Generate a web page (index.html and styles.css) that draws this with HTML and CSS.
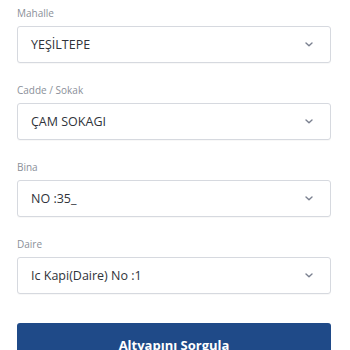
FILE: index.html
```html
<!DOCTYPE html>
<html lang="tr">
<head>
<meta charset="utf-8">
<link rel="stylesheet" href="styles.css">
</head>
<body>
<div class="form">
  <div class="field">
    <div class="label">Mahalle</div>
    <div class="select"><span class="value">YEŞİLTEPE</span><svg class="chev" width="8" height="5" viewBox="0 0 8 5"><path d="M1 1l3 2.8L7 1" fill="none" stroke="#7b8190" stroke-width="1.4" stroke-linecap="round" stroke-linejoin="round"/></svg></div>
  </div>
  <div class="field">
    <div class="label">Cadde / Sokak</div>
    <div class="select"><span class="value">ÇAM SOKAGI</span><svg class="chev" width="8" height="5" viewBox="0 0 8 5"><path d="M1 1l3 2.8L7 1" fill="none" stroke="#7b8190" stroke-width="1.4" stroke-linecap="round" stroke-linejoin="round"/></svg></div>
  </div>
  <div class="field">
    <div class="label">Bina</div>
    <div class="select"><span class="value">NO :35_</span><svg class="chev" width="8" height="5" viewBox="0 0 8 5"><path d="M1 1l3 2.8L7 1" fill="none" stroke="#7b8190" stroke-width="1.4" stroke-linecap="round" stroke-linejoin="round"/></svg></div>
  </div>
  <div class="field">
    <div class="label">Daire</div>
    <div class="select"><span class="value">Ic Kapi(Daire) No :1</span><svg class="chev" width="8" height="5" viewBox="0 0 8 5"><path d="M1 1l3 2.8L7 1" fill="none" stroke="#7b8190" stroke-width="1.4" stroke-linecap="round" stroke-linejoin="round"/></svg></div>
  </div>
  <button class="submit">Altyapını Sorgula</button>
</div>
</body>
</html>
```

FILE: styles.css
```css
html, body {
  margin: 0;
  padding: 0;
  background: #ffffff;
}
body {
  font-family: "Open Sans", "Noto Sans", sans-serif;
}
.form {
  width: 314px;
  padding-top: 6px;
  padding-left: 17px;
  padding-right: 19px;
  display: flex;
  flex-direction: column;
}
.field {
  display: flex;
  flex-direction: column;
  margin-bottom: 20px;
}
.label {
  font-size: 10px;
  line-height: 14px;
  color: #8a8f99;
  margin-bottom: 6px;
}
.select {
  box-sizing: border-box;
  height: 37px;
  border: 1px solid #d6d9df;
  border-radius: 3px;
  display: flex;
  align-items: center;
  justify-content: space-between;
  padding-right: 17px;
  background: #fff;
  box-shadow: 0 1px 1px rgba(0,0,0,0.03);
}
.value {
  margin-left: 13px;
  font-size: 12.5px;
  color: #2f333a;
}
.chev {
  display: block;
}
.submit {
  margin-top: 9px;
  height: 44px;
  border: none;
  border-radius: 3px;
  background: #1f4a88;
  color: #ffffff;
  font-family: "Open Sans", sans-serif;
  font-weight: 700;
  font-size: 13px;
  padding: 0;
}
```
